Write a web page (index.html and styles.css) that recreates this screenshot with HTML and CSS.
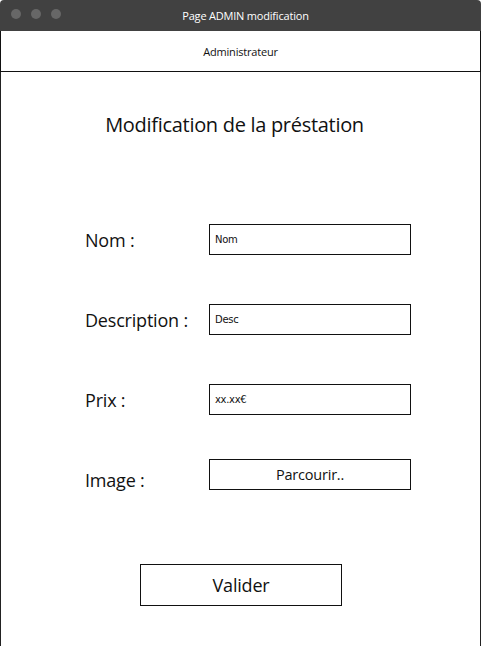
FILE: index.html
```html
<!DOCTYPE html>
<html lang="fr">
<head>
<meta charset="utf-8">
<title>Page ADMIN modification</title>
<link rel="stylesheet" href="styles.css">
</head>
<body>
<div class="window">
  <div class="titlebar">
    <div class="dots"><span class="dot"></span><span class="dot"></span><span class="dot"></span></div>
    <div class="title">Page ADMIN modification</div>
  </div>
  <div class="content">
    <div class="header">Administrateur</div>
    <h1 class="heading">Modification de la préstation</h1>
    <div class="form">
      <div class="row"><span class="label">Nom :</span><div class="field">Nom</div></div>
      <div class="row"><span class="label">Description :</span><div class="field">Desc</div></div>
      <div class="row"><span class="label">Prix :</span><div class="field">xx.xx€</div></div>
      <div class="row row-image"><span class="label">Image :</span><div class="browse">Parcourir..</div></div>
    </div>
    <div class="actions"><div class="submit">Valider</div></div>
  </div>
</div>
</body>
</html>
```
FILE: styles.css
```css
* { box-sizing: border-box; }
html, body { margin: 0; padding: 0; background: #fff; }
body { font-family: "Open Sans", "Noto Sans", sans-serif; color: #111; }
.window { width: 481px; height: 660px; display: flex; flex-direction: column; }
.titlebar {
  height: 31px; background: #414141; border-radius: 4px 4px 0 0;
  display: flex; align-items: center; position: relative;
}
.dots { display: flex; gap: 10px; padding-left: 11px; position: absolute; left: 0; top: 9px; }
.dot { width: 10px; height: 10px; border-radius: 50%; background: #676767; }
.title { flex: 1; text-align: center; color: #fff; font-size: 11px; letter-spacing: -0.2px; padding-left: 10px; }
.content { flex: 1; border-left: 1px solid #222; border-right: 1px solid #222; }
.header {
  height: 41px; border-bottom: 1px solid #111; display: flex; align-items: center;
  justify-content: center; font-size: 11px; letter-spacing: -0.2px;
  margin-left: -1px; margin-right: -1px; border-left: 1px solid #111; border-right: 1px solid #111;
}
.heading {
  margin: 38px 0 0; font-weight: 400; font-size: 20px; text-align: center;
  letter-spacing: -0.3px; line-height: 30px; padding-right: 12px;
}
.form { margin-top: 84px; padding-left: 84px; display: flex; flex-direction: column; gap: 49px; }
.row { display: flex; align-items: center; height: 31px; }
.label { width: 124px; font-size: 18px; letter-spacing: -0.2px; }
.field {
  width: 202px; height: 31px; border: 1px solid #111; font-family: "DejaVu Sans", sans-serif;
  font-size: 10px; padding-left: 5px; display: flex; align-items: center; letter-spacing: -0.3px;
}
.row-image { margin-top: -5px; }
.row-image .label { align-self: flex-end; margin-bottom: -2px; }
.browse {
  width: 202px; height: 31px; border: 1px solid #111; display: flex; align-items: center;
  justify-content: center; font-size: 14.5px; letter-spacing: -0.2px;
}
.actions { display: flex; margin-top: 74px; padding-left: 139px; }
.submit {
  width: 202px; height: 42px; border: 1px solid #111; display: flex; align-items: center;
  justify-content: center; font-size: 18px; letter-spacing: -0.2px;
}
```
